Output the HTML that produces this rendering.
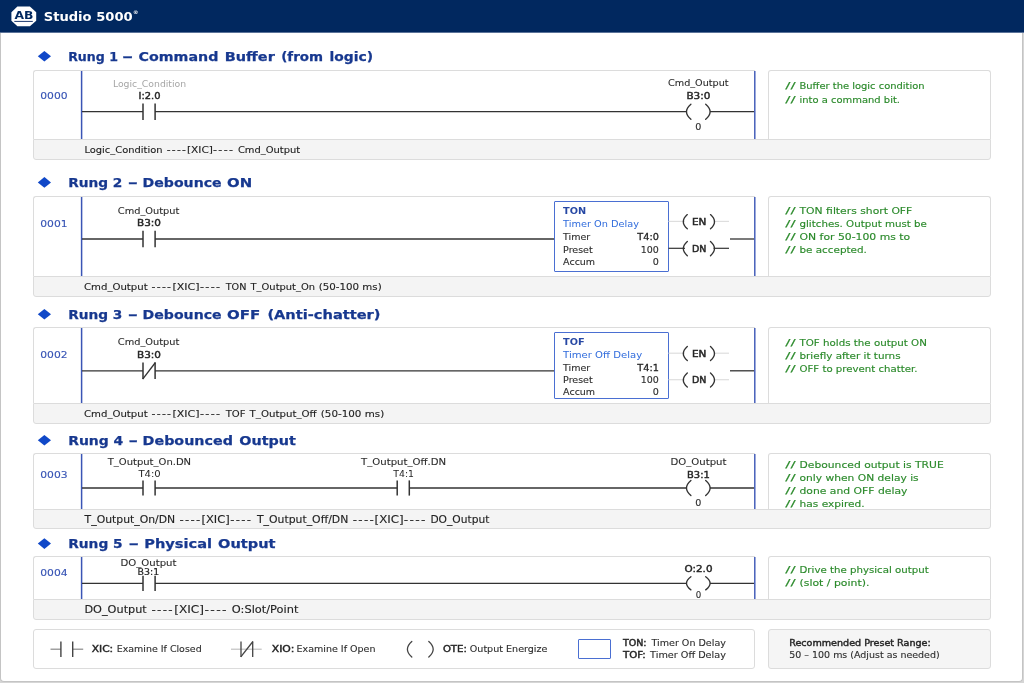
<!DOCTYPE html>
<html lang="en"><head><meta charset="utf-8"><title>Studio 5000 – Debounce Ladder Logic</title>
<style>
html,body{margin:0;padding:0}
body{width:1024px;height:683px;overflow:hidden;background:#d6d6d6;position:relative;font-family:"DejaVu Sans","Liberation Sans",sans-serif;color:#222}
.hdr{position:absolute;left:0;top:0;width:1024px;height:32px;background:#01285f;border-bottom:1px solid #5b7399}
.page{position:absolute;left:0;top:33px;width:1021px;height:648px;background:#fff;border:1px solid #c4c4c4;border-top:none;border-radius:0 0 4px 4px}
.t{position:absolute;white-space:pre;line-height:1;margin:0}
.brand{color:#fff;fill:#fff;font-weight:bold}
.ttl{color:#17388f;fill:#17388f;stroke:#17388f;stroke-width:0.25px;font-weight:bold}
.dia{position:absolute;width:0;height:0}
.box{position:absolute;box-sizing:border-box;border:1px solid #dcdcdc;background:#fff}
.lad{border-radius:3px 0 0 0;border-right:none;border-bottom:none}
.cmt{border-radius:3px 3px 0 0;border-bottom:none}
.foot{background:#f4f4f4;border-radius:0 0 3px 3px}
.leg{border-radius:3px}
text{white-space:pre;fill:#222}
.num{fill:#3552b4;stroke:#3552b4;stroke-width:0.1px}
.tag{fill:#2e2e2e;stroke:#2e2e2e;stroke-width:0.12px}
.adr{fill:#262626;stroke:#262626;stroke-width:0.42px}
.c{fill:#2b8a2b;stroke:#2b8a2b;stroke-width:0.15px}
.ft{fill:#222;stroke:#222;stroke-width:0.12px}
svg{position:absolute;left:0;top:0;overflow:visible;transform:translateZ(0)}
</style></head>
<body>
<div class="hdr"></div>
<div class="page"></div>
<div class="box lad" style="left:33px;top:70px;width:722px;height:69px"></div>
<div class="box cmt" style="left:768px;top:70px;width:223px;height:69px"></div>
<div class="box foot" style="left:33px;top:139px;width:958px;height:21px"></div>
<div class="box lad" style="left:33px;top:196px;width:722px;height:80px"></div>
<div class="box cmt" style="left:768px;top:196px;width:223px;height:80px"></div>
<div class="box foot" style="left:33px;top:276px;width:958px;height:21px"></div>
<div class="box" style="left:554px;top:201px;width:114.5px;height:70.7px;border:1.4px solid #4a6fd2;border-radius:1px"></div>
<div class="box lad" style="left:33px;top:327px;width:722px;height:76px"></div>
<div class="box cmt" style="left:768px;top:327px;width:223px;height:76px"></div>
<div class="box foot" style="left:33px;top:403px;width:958px;height:21px"></div>
<div class="box" style="left:554px;top:332px;width:114.5px;height:67.0px;border:1.4px solid #4a6fd2;border-radius:1px"></div>
<div class="box lad" style="left:33px;top:453px;width:722px;height:56px"></div>
<div class="box cmt" style="left:768px;top:453px;width:223px;height:56px"></div>
<div class="box foot" style="left:33px;top:509px;width:958px;height:20px"></div>
<div class="box lad" style="left:33px;top:556px;width:722px;height:43px"></div>
<div class="box cmt" style="left:768px;top:556px;width:223px;height:43px"></div>
<div class="box foot" style="left:33px;top:599px;width:958px;height:21px"></div>
<div class="box leg" style="left:33px;top:629px;width:722px;height:40px"></div>
<div class="box leg" style="left:768px;top:629px;width:223px;height:40px;background:#f5f5f5"></div>
<div class="box" style="left:578px;top:638.5px;width:33px;height:20.5px;border:1.4px solid #4a6fd2;border-radius:1px"></div>
<svg width="1024" height="683" viewBox="0 0 1024 683">
<polygon points="17.4,6.5 29.9,6.5 36.2,12.3 36.2,20.7 29.9,26.3 17.4,26.3 11.4,20.7 11.4,12.3" fill="#fff"/>
<rect x="14.3" y="20.9" width="18.5" height="1" fill="#1d3a70"/>
<polygon points="37.8,56.3 44.4,51.0 51.0,56.3 44.4,61.599999999999994" fill="#1048c8"/>
<line x1="81.6" y1="71" x2="81.6" y2="139" stroke="#3a55b5" stroke-width="1.5"/>
<line x1="754.8" y1="71" x2="754.8" y2="139" stroke="#3a55b5" stroke-width="1.4"/>
<line x1="82" y1="111.7" x2="143" y2="111.7" stroke="#333" stroke-width="1.3"/>
<line x1="143" y1="103.5" x2="143" y2="119.9" stroke="#333" stroke-width="1.5"/>
<line x1="155.1" y1="103.5" x2="155.1" y2="119.9" stroke="#333" stroke-width="1.5"/>
<line x1="155" y1="111.7" x2="687" y2="111.7" stroke="#333" stroke-width="1.3"/>
<path d="M690.90,104.2 Q682.10,111.7 690.90,119.2" stroke="#333" stroke-width="1.35" fill="none" stroke-linecap="round"/>
<path d="M705.70,104.2 Q714.50,111.7 705.70,119.2" stroke="#333" stroke-width="1.35" fill="none" stroke-linecap="round"/>
<line x1="710" y1="111.7" x2="754" y2="111.7" stroke="#333" stroke-width="1.3"/>
<polygon points="37.8,182.4 44.4,177.1 51.0,182.4 44.4,187.70000000000002" fill="#1048c8"/>
<line x1="81.6" y1="197" x2="81.6" y2="276" stroke="#3a55b5" stroke-width="1.5"/>
<line x1="754.8" y1="197" x2="754.8" y2="276" stroke="#3a55b5" stroke-width="1.4"/>
<line x1="82" y1="239" x2="143" y2="239" stroke="#333" stroke-width="1.3"/>
<line x1="143" y1="230.8" x2="143" y2="247.2" stroke="#333" stroke-width="1.5"/>
<line x1="155.1" y1="230.8" x2="155.1" y2="247.2" stroke="#333" stroke-width="1.5"/>
<line x1="155" y1="239" x2="554" y2="239" stroke="#333" stroke-width="1.3"/>
<line x1="730" y1="239" x2="754" y2="239" stroke="#333" stroke-width="1.3"/>
<line x1="668.5" y1="221.4" x2="685" y2="221.4" stroke="#dedede" stroke-width="1.2"/>
<line x1="713.5" y1="221.4" x2="729" y2="221.4" stroke="#dedede" stroke-width="1.2"/>
<path d="M687.30,214.60000000000002 Q679.30,221.70000000000002 687.30,228.8" stroke="#333" stroke-width="1.35" fill="none" stroke-linecap="round"/>
<path d="M710.50,214.60000000000002 Q718.50,221.70000000000002 710.50,228.8" stroke="#333" stroke-width="1.35" fill="none" stroke-linecap="round"/>
<line x1="668.5" y1="248.3" x2="685" y2="248.3" stroke="#333" stroke-width="1.2"/>
<line x1="713.5" y1="248.3" x2="729" y2="248.3" stroke="#333" stroke-width="1.2"/>
<path d="M687.30,241.50000000000003 Q679.30,248.60000000000002 687.30,255.70000000000002" stroke="#333" stroke-width="1.35" fill="none" stroke-linecap="round"/>
<path d="M710.50,241.50000000000003 Q718.50,248.60000000000002 710.50,255.70000000000002" stroke="#333" stroke-width="1.35" fill="none" stroke-linecap="round"/>
<polygon points="37.8,314.3 44.4,309.0 51.0,314.3 44.4,319.6" fill="#1048c8"/>
<line x1="81.6" y1="328" x2="81.6" y2="403" stroke="#3a55b5" stroke-width="1.5"/>
<line x1="754.8" y1="328" x2="754.8" y2="403" stroke="#3a55b5" stroke-width="1.4"/>
<line x1="82" y1="370.8" x2="143" y2="370.8" stroke="#333" stroke-width="1.3"/>
<line x1="143" y1="362.5" x2="143" y2="379.1" stroke="#333" stroke-width="1.5"/>
<line x1="155.1" y1="362.5" x2="155.1" y2="379.1" stroke="#333" stroke-width="1.5"/>
<line x1="142.7" y1="379.1" x2="155.4" y2="362.5" stroke="#333" stroke-width="1.3"/>
<line x1="155" y1="370.8" x2="554" y2="370.8" stroke="#333" stroke-width="1.3"/>
<line x1="730" y1="370.8" x2="754" y2="370.8" stroke="#333" stroke-width="1.3"/>
<line x1="668.5" y1="353.2" x2="685" y2="353.2" stroke="#dedede" stroke-width="1.2"/>
<line x1="713.5" y1="353.2" x2="729" y2="353.2" stroke="#dedede" stroke-width="1.2"/>
<path d="M687.30,346.4 Q679.30,353.5 687.30,360.6" stroke="#333" stroke-width="1.35" fill="none" stroke-linecap="round"/>
<path d="M710.50,346.4 Q718.50,353.5 710.50,360.6" stroke="#333" stroke-width="1.35" fill="none" stroke-linecap="round"/>
<line x1="668.5" y1="379.7" x2="685" y2="379.7" stroke="#dedede" stroke-width="1.2"/>
<line x1="713.5" y1="379.7" x2="729" y2="379.7" stroke="#dedede" stroke-width="1.2"/>
<path d="M687.30,372.9 Q679.30,380.0 687.30,387.1" stroke="#333" stroke-width="1.35" fill="none" stroke-linecap="round"/>
<path d="M710.50,372.9 Q718.50,380.0 710.50,387.1" stroke="#333" stroke-width="1.35" fill="none" stroke-linecap="round"/>
<polygon points="37.8,440.3 44.4,435.0 51.0,440.3 44.4,445.6" fill="#1048c8"/>
<line x1="81.6" y1="454" x2="81.6" y2="509" stroke="#3a55b5" stroke-width="1.5"/>
<line x1="754.8" y1="454" x2="754.8" y2="509" stroke="#3a55b5" stroke-width="1.4"/>
<line x1="82" y1="488" x2="143" y2="488" stroke="#333" stroke-width="1.3"/>
<line x1="143" y1="480.4" x2="143" y2="495.6" stroke="#333" stroke-width="1.5"/>
<line x1="155.1" y1="480.4" x2="155.1" y2="495.6" stroke="#333" stroke-width="1.5"/>
<line x1="155" y1="488" x2="397" y2="488" stroke="#333" stroke-width="1.3"/>
<line x1="397.2" y1="480.4" x2="397.2" y2="495.6" stroke="#333" stroke-width="1.5"/>
<line x1="409.3" y1="480.4" x2="409.3" y2="495.6" stroke="#333" stroke-width="1.5"/>
<line x1="409.3" y1="488" x2="687" y2="488" stroke="#333" stroke-width="1.3"/>
<path d="M690.90,480.5 Q682.10,488 690.90,495.5" stroke="#333" stroke-width="1.35" fill="none" stroke-linecap="round"/>
<path d="M705.70,480.5 Q714.50,488 705.70,495.5" stroke="#333" stroke-width="1.35" fill="none" stroke-linecap="round"/>
<line x1="710" y1="488" x2="754" y2="488" stroke="#333" stroke-width="1.3"/>
<polygon points="37.8,543.6 44.4,538.3000000000001 51.0,543.6 44.4,548.9" fill="#1048c8"/>
<line x1="81.6" y1="557" x2="81.6" y2="599" stroke="#3a55b5" stroke-width="1.5"/>
<line x1="754.8" y1="557" x2="754.8" y2="599" stroke="#3a55b5" stroke-width="1.4"/>
<line x1="82" y1="583.3" x2="143" y2="583.3" stroke="#333" stroke-width="1.3"/>
<line x1="143" y1="575.6999999999999" x2="143" y2="590.9" stroke="#333" stroke-width="1.5"/>
<line x1="155.1" y1="575.6999999999999" x2="155.1" y2="590.9" stroke="#333" stroke-width="1.5"/>
<line x1="155" y1="583.3" x2="687" y2="583.3" stroke="#333" stroke-width="1.3"/>
<path d="M690.90,576.6999999999999 Q682.10,583.3 690.90,589.9" stroke="#333" stroke-width="1.35" fill="none" stroke-linecap="round"/>
<path d="M705.70,576.6999999999999 Q714.50,583.3 705.70,589.9" stroke="#333" stroke-width="1.35" fill="none" stroke-linecap="round"/>
<line x1="710" y1="583.3" x2="754" y2="583.3" stroke="#333" stroke-width="1.3"/>
<line x1="50.5" y1="649.2" x2="61" y2="649.2" stroke="#888" stroke-width="1.2"/>
<line x1="72.5" y1="649.2" x2="83.2" y2="649.2" stroke="#888" stroke-width="1.2"/>
<line x1="60.9" y1="641.5" x2="60.9" y2="656.9000000000001" stroke="#444" stroke-width="1.4"/>
<line x1="72.7" y1="641.5" x2="72.7" y2="656.9000000000001" stroke="#444" stroke-width="1.4"/>
<line x1="231" y1="649.2" x2="261.7" y2="649.2" stroke="#bbb" stroke-width="1.1"/>
<line x1="241" y1="641.5" x2="241" y2="656.9000000000001" stroke="#444" stroke-width="1.3"/>
<line x1="252.7" y1="641.5" x2="252.7" y2="656.9000000000001" stroke="#444" stroke-width="1.3"/>
<line x1="240.8" y1="656.9000000000001" x2="252.9" y2="641.5" stroke="#444" stroke-width="1.3"/>
<path d="M411.80,641.4000000000001 Q403.00,649.2 411.80,657.0" stroke="#444" stroke-width="1.3" fill="none" stroke-linecap="round"/>
<path d="M428.80,641.4000000000001 Q437.60,649.2 428.80,657.0" stroke="#444" stroke-width="1.3" fill="none" stroke-linecap="round"/>
<text class="" x="23.9" y="18.9" font-size="10.3" textLength="19.0" lengthAdjust="spacingAndGlyphs" text-anchor="middle" style="fill:#01285f;font-weight:bold">AB</text>
<text class="brand" x="43.7" y="20.9" font-size="12.6" textLength="89.0" lengthAdjust="spacingAndGlyphs">Studio 5000</text>
<text class="brand" x="133.0" y="14.3" font-size="5" textLength="5.4" lengthAdjust="spacingAndGlyphs">®</text>
<text class="ttl" x="68.2" y="60.9" font-size="12.6" textLength="49.7" lengthAdjust="spacingAndGlyphs">Rung 1</text>
<text class="ttl" x="122.3" y="60.9" font-size="12.6" textLength="10.7" lengthAdjust="spacingAndGlyphs">–</text>
<text class="ttl" x="138.5" y="60.9" font-size="12.6" textLength="79.9" lengthAdjust="spacingAndGlyphs">Command</text>
<text class="ttl" x="224.8" y="60.9" font-size="12.6" textLength="50.0" lengthAdjust="spacingAndGlyphs">Buffer</text>
<text class="ttl" x="281.2" y="60.9" font-size="12.6" textLength="41.9" lengthAdjust="spacingAndGlyphs">(from</text>
<text class="ttl" x="329.6" y="60.9" font-size="12.6" textLength="43.5" lengthAdjust="spacingAndGlyphs">logic)</text>
<text class="num" x="40.2" y="99.4" font-size="9.3" textLength="27.4" lengthAdjust="spacingAndGlyphs">0000</text>
<text class="ft" x="84.4" y="152.6" font-size="9.4" textLength="78.1" lengthAdjust="spacingAndGlyphs">Logic_Condition</text>
<text class="ft" x="166.7" y="152.6" font-size="9.4" textLength="20.4" lengthAdjust="spacingAndGlyphs" style="letter-spacing:1.1px">----</text>
<text class="ft" x="186.9" y="152.6" font-size="9.4" textLength="26.1" lengthAdjust="spacingAndGlyphs">[XIC]</text>
<text class="ft" x="213.1" y="152.6" font-size="9.4" textLength="21.1" lengthAdjust="spacingAndGlyphs" style="letter-spacing:1.1px">----</text>
<text class="ft" x="237.9" y="152.6" font-size="9.4" textLength="62.3" lengthAdjust="spacingAndGlyphs">Cmd_Output</text>
<text class="c" x="785.2" y="89.3" font-size="9.3" textLength="10.4" lengthAdjust="spacingAndGlyphs">//</text>
<text class="c" x="799.5" y="89.3" font-size="9.3" textLength="125.1" lengthAdjust="spacingAndGlyphs">Buffer the logic condition</text>
<text class="c" x="785.2" y="102.6" font-size="9.3" textLength="10.4" lengthAdjust="spacingAndGlyphs">//</text>
<text class="c" x="799.5" y="102.6" font-size="9.3" textLength="100.5" lengthAdjust="spacingAndGlyphs">into a command bit.</text>
<text class="tag" x="112.9" y="86.6" font-size="8.9" textLength="73.3" lengthAdjust="spacingAndGlyphs" style="fill:#a6a6a6;stroke:none">Logic_Condition</text>
<text class="adr" x="149.5" y="99.0" font-size="9.2" textLength="22.0" lengthAdjust="spacingAndGlyphs" text-anchor="middle">I:2.0</text>
<text class="tag" x="698.3" y="86.4" font-size="8.9" textLength="60.6" lengthAdjust="spacingAndGlyphs" text-anchor="middle">Cmd_Output</text>
<text class="adr" x="698.4" y="99.0" font-size="9.2" textLength="24.0" lengthAdjust="spacingAndGlyphs" text-anchor="middle">B3:0</text>
<text class="tag" x="698.4" y="130.1" font-size="9" textLength="6.1" lengthAdjust="spacingAndGlyphs" text-anchor="middle">0</text>
<text class="ttl" x="68.2" y="187.0" font-size="12.6" textLength="54.2" lengthAdjust="spacingAndGlyphs">Rung 2</text>
<text class="ttl" x="128.1" y="187.0" font-size="12.6" textLength="9.7" lengthAdjust="spacingAndGlyphs">–</text>
<text class="ttl" x="142.6" y="187.0" font-size="12.6" textLength="79.0" lengthAdjust="spacingAndGlyphs">Debounce</text>
<text class="ttl" x="227.1" y="187.0" font-size="12.6" textLength="25.1" lengthAdjust="spacingAndGlyphs">ON</text>
<text class="num" x="40.2" y="227.2" font-size="9.3" textLength="27.4" lengthAdjust="spacingAndGlyphs">0001</text>
<text class="ft" x="84.0" y="289.8" font-size="9.4" textLength="63.7" lengthAdjust="spacingAndGlyphs">Cmd_Output</text>
<text class="ft" x="151.5" y="289.8" font-size="9.4" textLength="20.8" lengthAdjust="spacingAndGlyphs" style="letter-spacing:1.1px">----</text>
<text class="ft" x="172.4" y="289.8" font-size="9.4" textLength="27.1" lengthAdjust="spacingAndGlyphs">[XIC]</text>
<text class="ft" x="200.0" y="289.8" font-size="9.4" textLength="21.4" lengthAdjust="spacingAndGlyphs" style="letter-spacing:1.1px">----</text>
<text class="ft" x="225.7" y="289.8" font-size="9.4" textLength="20.7" lengthAdjust="spacingAndGlyphs">TON</text>
<text class="ft" x="250.5" y="289.8" font-size="9.4" textLength="64.6" lengthAdjust="spacingAndGlyphs">T_Output_On</text>
<text class="ft" x="318.7" y="289.8" font-size="9.4" textLength="63.0" lengthAdjust="spacingAndGlyphs">(50-100 ms)</text>
<text class="c" x="785.2" y="214.3" font-size="9.3" textLength="10.4" lengthAdjust="spacingAndGlyphs">//</text>
<text class="c" x="799.5" y="214.3" font-size="9.3" textLength="112.8" lengthAdjust="spacingAndGlyphs">TON filters short OFF</text>
<text class="c" x="785.2" y="227.3" font-size="9.3" textLength="10.4" lengthAdjust="spacingAndGlyphs">//</text>
<text class="c" x="799.5" y="227.3" font-size="9.3" textLength="127.4" lengthAdjust="spacingAndGlyphs">glitches. Output must be</text>
<text class="c" x="785.2" y="240.3" font-size="9.3" textLength="10.4" lengthAdjust="spacingAndGlyphs">//</text>
<text class="c" x="799.5" y="240.3" font-size="9.3" textLength="110.7" lengthAdjust="spacingAndGlyphs">ON for 50-100 ms to</text>
<text class="c" x="785.2" y="253.2" font-size="9.3" textLength="10.4" lengthAdjust="spacingAndGlyphs">//</text>
<text class="c" x="799.5" y="253.2" font-size="9.3" textLength="67.3" lengthAdjust="spacingAndGlyphs">be accepted.</text>
<text class="tag" x="148.6" y="213.6" font-size="8.9" textLength="61.5" lengthAdjust="spacingAndGlyphs" text-anchor="middle">Cmd_Output</text>
<text class="adr" x="149.0" y="226.2" font-size="9.2" textLength="24.0" lengthAdjust="spacingAndGlyphs" text-anchor="middle">B3:0</text>
<text class="" x="563.1" y="214.1" font-size="9.1" textLength="23.1" lengthAdjust="spacingAndGlyphs" style="fill:#2748a4;font-weight:bold">TON</text>
<text class="" x="563.1" y="227.1" font-size="8.9" textLength="76.0" lengthAdjust="spacingAndGlyphs" style="fill:#2f6bdc">Timer On Delay</text>
<text class="tag" x="563.1" y="239.9" font-size="8.9" textLength="27.2" lengthAdjust="spacingAndGlyphs">Timer</text>
<text class="tag" x="563.1" y="252.7" font-size="8.9" textLength="29.6" lengthAdjust="spacingAndGlyphs">Preset</text>
<text class="tag" x="563.1" y="265.0" font-size="8.9" textLength="32.0" lengthAdjust="spacingAndGlyphs">Accum</text>
<text class="adr" x="658.9" y="240.0" font-size="9.1" textLength="21.6" lengthAdjust="spacingAndGlyphs" text-anchor="end" style="stroke-width:0.28px">T4:0</text>
<text class="tag" x="658.9" y="252.7" font-size="8.9" textLength="18.1" lengthAdjust="spacingAndGlyphs" text-anchor="end">100</text>
<text class="tag" x="658.9" y="265.0" font-size="8.9" textLength="6.1" lengthAdjust="spacingAndGlyphs" text-anchor="end">0</text>
<text class="adr" x="699.1" y="224.7" font-size="8.2" textLength="14.4" lengthAdjust="spacingAndGlyphs" text-anchor="middle">EN</text>
<text class="adr" x="699.1" y="251.6" font-size="8.2" textLength="14.4" lengthAdjust="spacingAndGlyphs" text-anchor="middle">DN</text>
<text class="ttl" x="68.2" y="318.9" font-size="12.6" textLength="54.2" lengthAdjust="spacingAndGlyphs">Rung 3</text>
<text class="ttl" x="128.1" y="318.9" font-size="12.6" textLength="9.7" lengthAdjust="spacingAndGlyphs">–</text>
<text class="ttl" x="142.6" y="318.9" font-size="12.6" textLength="79.0" lengthAdjust="spacingAndGlyphs">Debounce</text>
<text class="ttl" x="227.1" y="318.9" font-size="12.6" textLength="33.2" lengthAdjust="spacingAndGlyphs">OFF</text>
<text class="ttl" x="267.4" y="318.9" font-size="12.6" textLength="113.1" lengthAdjust="spacingAndGlyphs">(Anti-chatter)</text>
<text class="num" x="40.2" y="358.0" font-size="9.3" textLength="27.4" lengthAdjust="spacingAndGlyphs">0002</text>
<text class="ft" x="84.0" y="417.3" font-size="9.4" textLength="63.7" lengthAdjust="spacingAndGlyphs">Cmd_Output</text>
<text class="ft" x="151.5" y="417.3" font-size="9.4" textLength="20.8" lengthAdjust="spacingAndGlyphs" style="letter-spacing:1.1px">----</text>
<text class="ft" x="172.4" y="417.3" font-size="9.4" textLength="27.1" lengthAdjust="spacingAndGlyphs">[XIC]</text>
<text class="ft" x="200.0" y="417.3" font-size="9.4" textLength="21.4" lengthAdjust="spacingAndGlyphs" style="letter-spacing:1.1px">----</text>
<text class="ft" x="225.7" y="417.3" font-size="9.4" textLength="19.8" lengthAdjust="spacingAndGlyphs">TOF</text>
<text class="ft" x="249.6" y="417.3" font-size="9.4" textLength="67.0" lengthAdjust="spacingAndGlyphs">T_Output_Off</text>
<text class="ft" x="320.8" y="417.3" font-size="9.4" textLength="63.4" lengthAdjust="spacingAndGlyphs">(50-100 ms)</text>
<text class="c" x="785.2" y="345.7" font-size="9.3" textLength="10.4" lengthAdjust="spacingAndGlyphs">//</text>
<text class="c" x="799.5" y="345.7" font-size="9.3" textLength="127.4" lengthAdjust="spacingAndGlyphs">TOF holds the output ON</text>
<text class="c" x="785.2" y="358.6" font-size="9.3" textLength="10.4" lengthAdjust="spacingAndGlyphs">//</text>
<text class="c" x="799.5" y="358.6" font-size="9.3" textLength="101.1" lengthAdjust="spacingAndGlyphs">briefly after it turns</text>
<text class="c" x="785.2" y="371.5" font-size="9.3" textLength="10.4" lengthAdjust="spacingAndGlyphs">//</text>
<text class="c" x="799.5" y="371.5" font-size="9.3" textLength="117.9" lengthAdjust="spacingAndGlyphs">OFF to prevent chatter.</text>
<text class="tag" x="148.6" y="345.2" font-size="8.9" textLength="61.5" lengthAdjust="spacingAndGlyphs" text-anchor="middle">Cmd_Output</text>
<text class="adr" x="149.0" y="357.8" font-size="9.2" textLength="24.0" lengthAdjust="spacingAndGlyphs" text-anchor="middle">B3:0</text>
<text class="" x="563.1" y="345.3" font-size="9.1" textLength="21.6" lengthAdjust="spacingAndGlyphs" style="fill:#2748a4;font-weight:bold">TOF</text>
<text class="" x="563.1" y="358.2" font-size="8.9" textLength="79.0" lengthAdjust="spacingAndGlyphs" style="fill:#2f6bdc">Timer Off Delay</text>
<text class="tag" x="563.1" y="371.2" font-size="8.9" textLength="27.2" lengthAdjust="spacingAndGlyphs">Timer</text>
<text class="tag" x="563.1" y="383.3" font-size="8.9" textLength="29.6" lengthAdjust="spacingAndGlyphs">Preset</text>
<text class="tag" x="563.1" y="395.0" font-size="8.9" textLength="32.0" lengthAdjust="spacingAndGlyphs">Accum</text>
<text class="adr" x="658.9" y="371.3" font-size="9.1" textLength="21.6" lengthAdjust="spacingAndGlyphs" text-anchor="end" style="stroke-width:0.28px">T4:1</text>
<text class="tag" x="658.9" y="383.3" font-size="8.9" textLength="18.1" lengthAdjust="spacingAndGlyphs" text-anchor="end">100</text>
<text class="tag" x="658.9" y="395.0" font-size="8.9" textLength="6.1" lengthAdjust="spacingAndGlyphs" text-anchor="end">0</text>
<text class="adr" x="699.1" y="356.5" font-size="8.2" textLength="14.4" lengthAdjust="spacingAndGlyphs" text-anchor="middle">EN</text>
<text class="adr" x="699.1" y="383.0" font-size="8.2" textLength="14.4" lengthAdjust="spacingAndGlyphs" text-anchor="middle">DN</text>
<text class="ttl" x="68.2" y="444.9" font-size="12.6" textLength="55.1" lengthAdjust="spacingAndGlyphs">Rung 4</text>
<text class="ttl" x="128.8" y="444.9" font-size="12.6" textLength="9.0" lengthAdjust="spacingAndGlyphs">–</text>
<text class="ttl" x="142.6" y="444.9" font-size="12.6" textLength="90.3" lengthAdjust="spacingAndGlyphs">Debounced</text>
<text class="ttl" x="239.3" y="444.9" font-size="12.6" textLength="56.5" lengthAdjust="spacingAndGlyphs">Output</text>
<text class="num" x="40.2" y="477.8" font-size="9.3" textLength="27.4" lengthAdjust="spacingAndGlyphs">0003</text>
<text class="ft" x="84.6" y="522.6" font-size="9.8" textLength="90.6" lengthAdjust="spacingAndGlyphs">T_Output_On/DN</text>
<text class="ft" x="179.4" y="522.6" font-size="9.8" textLength="22.1" lengthAdjust="spacingAndGlyphs" style="letter-spacing:1.1px">----</text>
<text class="ft" x="201.5" y="522.6" font-size="9.8" textLength="28.3" lengthAdjust="spacingAndGlyphs">[XIC]</text>
<text class="ft" x="230.2" y="522.6" font-size="9.8" textLength="22.1" lengthAdjust="spacingAndGlyphs" style="letter-spacing:1.1px">----</text>
<text class="ft" x="256.9" y="522.6" font-size="9.8" textLength="91.4" lengthAdjust="spacingAndGlyphs">T_Output_Off/DN</text>
<text class="ft" x="352.7" y="522.6" font-size="9.8" textLength="22.5" lengthAdjust="spacingAndGlyphs" style="letter-spacing:1.1px">----</text>
<text class="ft" x="374.6" y="522.6" font-size="9.8" textLength="29.1" lengthAdjust="spacingAndGlyphs">[XIC]</text>
<text class="ft" x="403.7" y="522.6" font-size="9.8" textLength="23.2" lengthAdjust="spacingAndGlyphs" style="letter-spacing:1.1px">----</text>
<text class="ft" x="430.4" y="522.6" font-size="9.8" textLength="59.0" lengthAdjust="spacingAndGlyphs">DO_Output</text>
<text class="c" x="785.2" y="468.2" font-size="9.3" textLength="10.4" lengthAdjust="spacingAndGlyphs">//</text>
<text class="c" x="799.5" y="468.2" font-size="9.3" textLength="144.2" lengthAdjust="spacingAndGlyphs">Debounced output is TRUE</text>
<text class="c" x="785.2" y="481.0" font-size="9.3" textLength="10.4" lengthAdjust="spacingAndGlyphs">//</text>
<text class="c" x="799.5" y="481.0" font-size="9.3" textLength="119.2" lengthAdjust="spacingAndGlyphs">only when ON delay is</text>
<text class="c" x="785.2" y="493.9" font-size="9.3" textLength="10.4" lengthAdjust="spacingAndGlyphs">//</text>
<text class="c" x="799.5" y="493.9" font-size="9.3" textLength="107.9" lengthAdjust="spacingAndGlyphs">done and OFF delay</text>
<text class="c" x="785.2" y="506.6" font-size="9.3" textLength="10.4" lengthAdjust="spacingAndGlyphs">//</text>
<text class="c" x="799.5" y="506.6" font-size="9.3" textLength="65.2" lengthAdjust="spacingAndGlyphs">has expired.</text>
<text class="tag" x="149.4" y="465.2" font-size="8.9" textLength="83.4" lengthAdjust="spacingAndGlyphs" text-anchor="middle">T_Output_On.DN</text>
<text class="adr" x="149.6" y="477.1" font-size="9.2" textLength="22.3" lengthAdjust="spacingAndGlyphs" text-anchor="middle" style="stroke:none">T4:0</text>
<text class="tag" x="403.6" y="465.1" font-size="8.9" textLength="85.0" lengthAdjust="spacingAndGlyphs" text-anchor="middle">T_Output_Off.DN</text>
<text class="adr" x="403.7" y="477.2" font-size="9.2" textLength="20.7" lengthAdjust="spacingAndGlyphs" text-anchor="middle" style="stroke:none">T4:1</text>
<text class="tag" x="698.5" y="465.0" font-size="8.9" textLength="56.0" lengthAdjust="spacingAndGlyphs" text-anchor="middle">DO_Output</text>
<text class="adr" x="698.4" y="477.5" font-size="9.2" textLength="22.8" lengthAdjust="spacingAndGlyphs" text-anchor="middle">B3:1</text>
<text class="tag" x="698.4" y="505.5" font-size="9" textLength="6.1" lengthAdjust="spacingAndGlyphs" text-anchor="middle">0</text>
<text class="ttl" x="68.2" y="548.2" font-size="12.6" textLength="54.5" lengthAdjust="spacingAndGlyphs">Rung 5</text>
<text class="ttl" x="128.8" y="548.2" font-size="12.6" textLength="10.0" lengthAdjust="spacingAndGlyphs">–</text>
<text class="ttl" x="144.3" y="548.2" font-size="12.6" textLength="67.7" lengthAdjust="spacingAndGlyphs">Physical</text>
<text class="ttl" x="218.1" y="548.2" font-size="12.6" textLength="57.4" lengthAdjust="spacingAndGlyphs">Output</text>
<text class="num" x="40.2" y="576.0" font-size="9.3" textLength="27.4" lengthAdjust="spacingAndGlyphs">0004</text>
<text class="ft" x="84.4" y="613.2" font-size="9.8" textLength="62.4" lengthAdjust="spacingAndGlyphs">DO_Output</text>
<text class="ft" x="151.4" y="613.2" font-size="9.8" textLength="22.6" lengthAdjust="spacingAndGlyphs" style="letter-spacing:1.1px">----</text>
<text class="ft" x="174.3" y="613.2" font-size="9.8" textLength="29.7" lengthAdjust="spacingAndGlyphs">[XIC]</text>
<text class="ft" x="204.4" y="613.2" font-size="9.8" textLength="23.6" lengthAdjust="spacingAndGlyphs" style="letter-spacing:1.1px">----</text>
<text class="ft" x="231.8" y="613.2" font-size="9.8" textLength="66.6" lengthAdjust="spacingAndGlyphs">O:Slot/Point</text>
<text class="c" x="785.2" y="572.8" font-size="9.3" textLength="10.4" lengthAdjust="spacingAndGlyphs">//</text>
<text class="c" x="799.5" y="572.8" font-size="9.3" textLength="129.2" lengthAdjust="spacingAndGlyphs">Drive the physical output</text>
<text class="c" x="785.2" y="585.7" font-size="9.3" textLength="10.4" lengthAdjust="spacingAndGlyphs">//</text>
<text class="c" x="799.5" y="585.7" font-size="9.3" textLength="69.9" lengthAdjust="spacingAndGlyphs">(slot / point).</text>
<text class="tag" x="148.5" y="565.7" font-size="8.9" textLength="56.0" lengthAdjust="spacingAndGlyphs" text-anchor="middle">DO_Output</text>
<text class="adr" x="148.4" y="574.5" font-size="8.6" textLength="21.6" lengthAdjust="spacingAndGlyphs" text-anchor="middle" style="stroke-width:0.2px">B3:1</text>
<text class="adr" x="698.5" y="571.5" font-size="9.2" textLength="28.0" lengthAdjust="spacingAndGlyphs" text-anchor="middle">O:2.0</text>
<text class="tag" x="698.4" y="598.4" font-size="8" textLength="5.5" lengthAdjust="spacingAndGlyphs" text-anchor="middle">0</text>
<text class="adr" x="91.7" y="652.4" font-size="8.8" textLength="21.5" lengthAdjust="spacingAndGlyphs">XIC:</text>
<text class="tag" x="116.7" y="652.4" font-size="8.8" textLength="85.0" lengthAdjust="spacingAndGlyphs">Examine If Closed</text>
<text class="adr" x="271.8" y="652.4" font-size="8.8" textLength="22.5" lengthAdjust="spacingAndGlyphs">XIO:</text>
<text class="tag" x="296.5" y="652.4" font-size="8.8" textLength="79.0" lengthAdjust="spacingAndGlyphs">Examine If Open</text>
<text class="adr" x="442.9" y="652.4" font-size="8.8" textLength="24.0" lengthAdjust="spacingAndGlyphs">OTE:</text>
<text class="tag" x="469.8" y="652.4" font-size="8.8" textLength="77.6" lengthAdjust="spacingAndGlyphs">Output Energize</text>
<text class="adr" x="622.9" y="645.8" font-size="8.8" textLength="23.7" lengthAdjust="spacingAndGlyphs">TON:</text>
<text class="tag" x="651.5" y="645.8" font-size="8.8" textLength="74.4" lengthAdjust="spacingAndGlyphs">Timer On Delay</text>
<text class="adr" x="622.9" y="658.1" font-size="8.8" textLength="22.8" lengthAdjust="spacingAndGlyphs">TOF:</text>
<text class="tag" x="650.1" y="658.1" font-size="8.8" textLength="75.8" lengthAdjust="spacingAndGlyphs">Timer Off Delay</text>
<text class="adr" x="789.2" y="645.9" font-size="9" textLength="141.5" lengthAdjust="spacingAndGlyphs">Recommended Preset Range:</text>
<text class="tag" x="789.2" y="658.1" font-size="8.8" textLength="150.5" lengthAdjust="spacingAndGlyphs">50 – 100 ms (Adjust as needed)</text>
</svg>
</body></html>
